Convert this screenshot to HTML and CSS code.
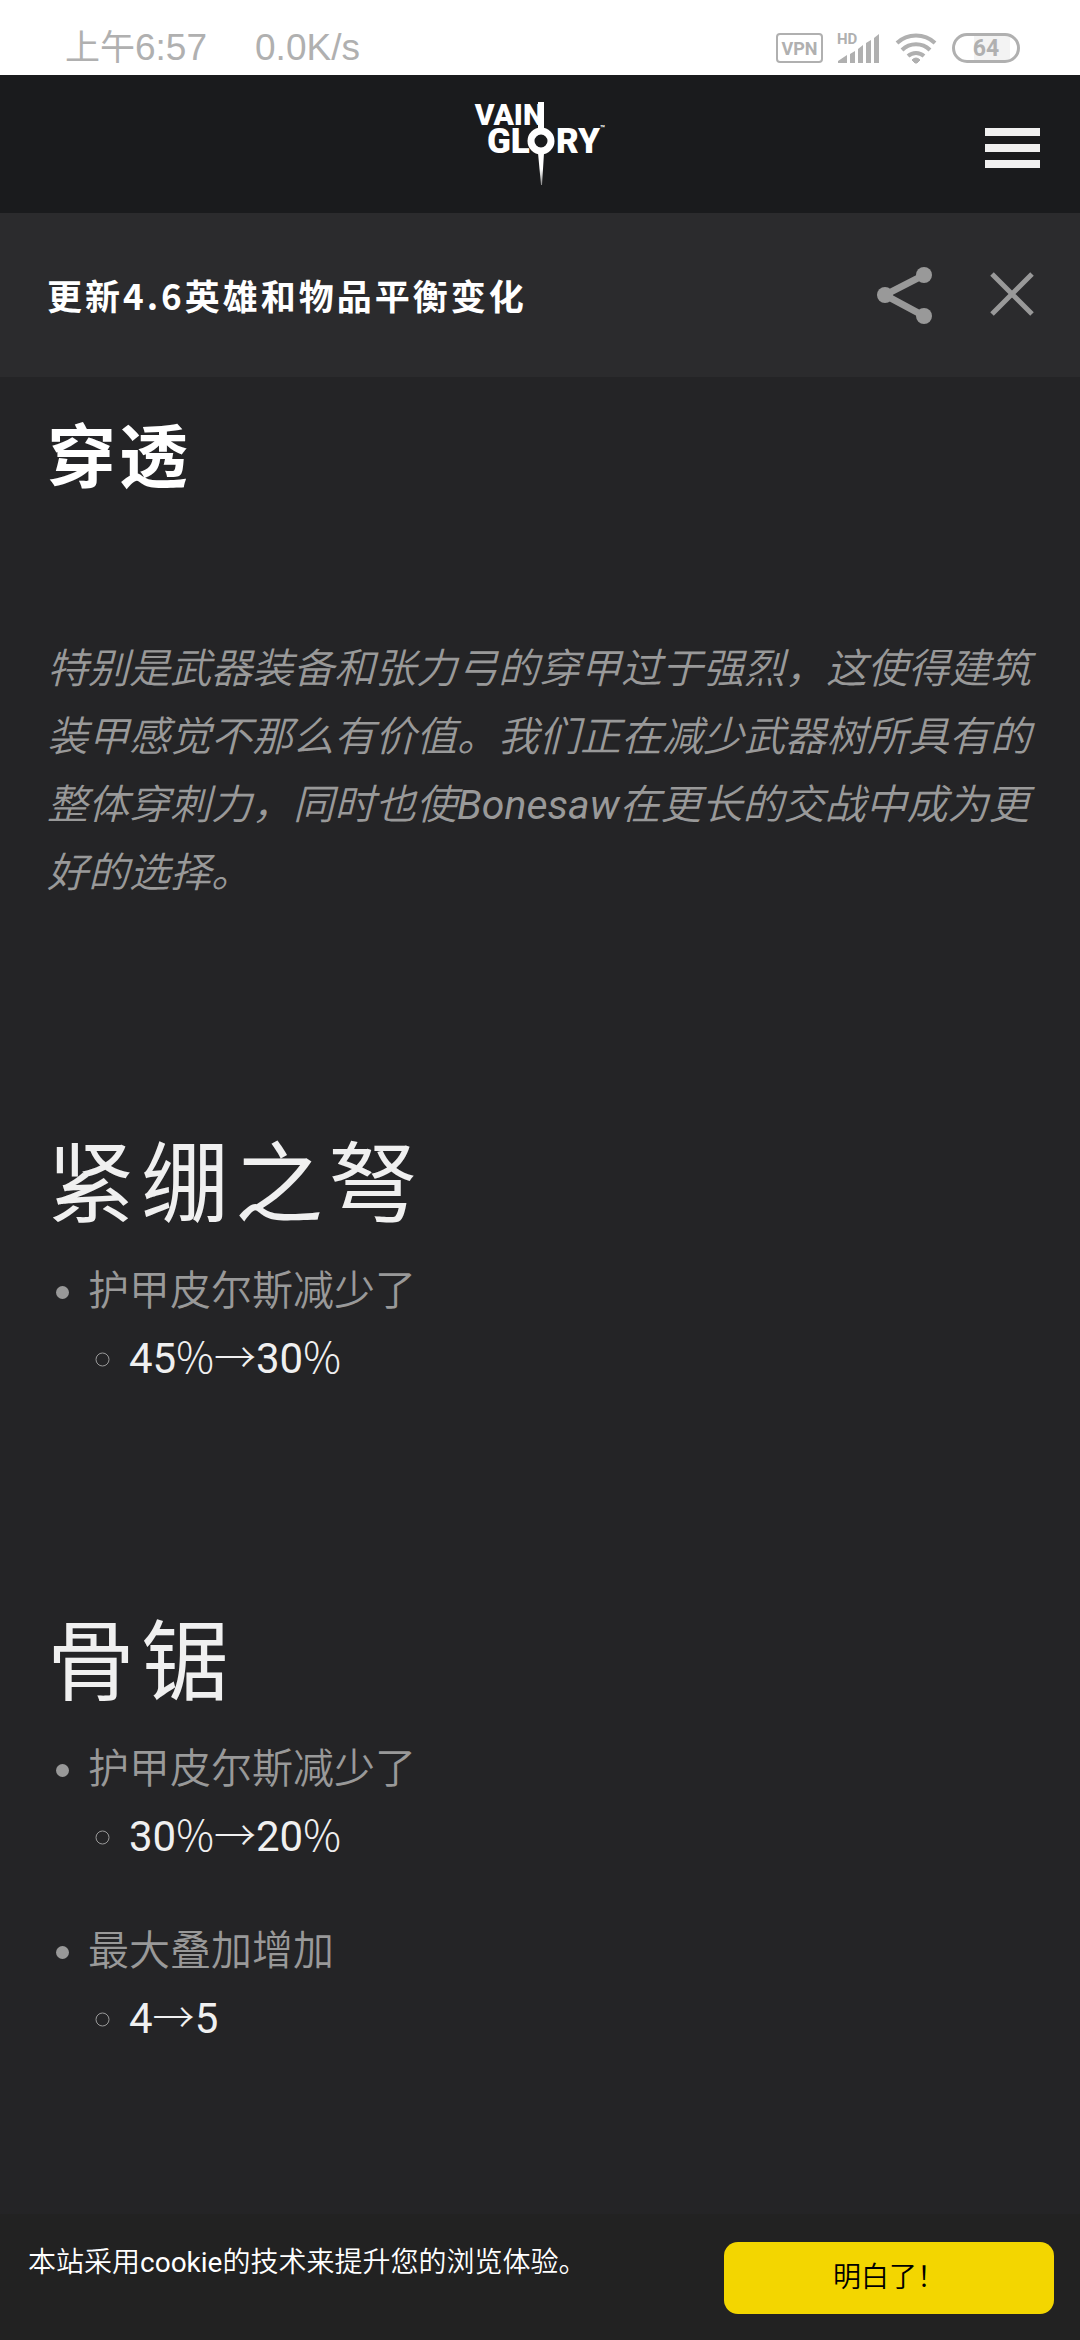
FILE: index.html
```
<!DOCTYPE html>
<html lang="zh-CN">
<head>
    <meta charset="UTF-8">
    <meta name="viewport" content="width=device-width, initial-scale=1.0">
    <title>更新4.6英雄和物品平衡变化</title>
    <link rel="stylesheet" href="styles.css">
</head>
<body>
    <div class="status">
        <div class="status-left">
            <span><span class="ampm">上午</span>6:57</span>
            <span>0.0K/s</span>
        </div>
        <div class="status-right">
            <span class="vpn">VPN</span>
            <svg class="signal" width="42" height="32" viewBox="0 0 42 32">
                <text x="-1" y="12">HD</text>
                <path d="M0 31v-2l9-6v8zM12 31v-9l5-3v12zM20 31V17l5-4v18zM28 31V11l5-3v23zM36 31V6l5-4v29z"/>
            </svg>
            <svg class="wifi" width="42" height="32" viewBox="0 0 42 32">
                <path d="M2 11a28 28 0 0 1 38 0M7 18a20 20 0 0 1 28 0M13 24a12 12 0 0 1 16 0"/>
                <path class="dot" d="M17 28q4-4 8 0l-3 3h-2z"/>
            </svg>
            <span class="battery">64</span>
        </div>
    </div>

    <header class="header">
        <a class="logo" href="#" aria-label="Vainglory">
            <svg width="132" height="84" viewBox="0 0 132 84">
                <defs>
                    <linearGradient id="blade" x1="0" y1="0" x2="0" y2="1">
                        <stop offset="0" stop-color="#fff"/>
                        <stop offset="0.5" stop-color="#fff"/>
                        <stop offset="1" stop-color="#888"/>
                    </linearGradient>
                </defs>
                <text class="logo-top" x="70" y="23">VAIN</text>
                <text class="logo-text" x="13" y="51">GL</text>
                <text class="logo-text" x="82" y="51">RY</text>
                <text class="logo-tm" x="126" y="29">™</text>
                <path d="M64 0h6v30h-6z" fill="#fff"/>
                <circle cx="67" cy="39" r="10" fill="#1a1b1d" stroke="#fff" stroke-width="7"/>
                <path d="M64 51h6l-2 32h-1z" fill="url(#blade)"/>
            </svg>
        </a>
        <button class="menu" aria-label="菜单"><i></i><i></i><i></i></button>
    </header>

    <div class="title-bar">
        <h1>更新4.6英雄和物品平衡变化</h1>
        <button aria-label="分享">
            <svg width="56" height="56" viewBox="0 0 56 56">
                <path d="M47 8L8 28l39 21" fill="none" stroke="#999" stroke-width="7"/>
                <g fill="#999">
                    <circle cx="47" cy="8" r="8"/>
                    <circle cx="8" cy="28" r="8"/>
                    <circle cx="47" cy="49" r="8"/>
                </g>
            </svg>
        </button>
        <button aria-label="关闭">
            <svg width="46" height="46" viewBox="0 0 46 46">
                <path d="M3 2l40 40M43 2L3 42" fill="none" stroke="#999" stroke-width="5"/>
            </svg>
        </button>
    </div>

    <main class="article">
        <h2>穿透</h2>
        <p>特别是武器装备和张力弓的穿甲过于强烈，这使得建筑装甲感觉不那么有价值。我们正在减少武器树所具有的整体穿刺力，同时也使Bonesaw在更长的交战中成为更好的选择。</p>

        <section>
            <h3>紧绷之弩</h3>
            <ul>
                <li>护甲皮尔斯减少了
                    <ul>
                        <li>45<span>%→</span>30<span>%</span></li>
                    </ul>
                </li>
            </ul>
        </section>

        <section>
            <h3>骨锯</h3>
            <ul>
                <li>护甲皮尔斯减少了
                    <ul>
                        <li>30<span>%→</span>20<span>%</span></li>
                    </ul>
                </li>
                <li>最大叠加增加
                    <ul>
                        <li>4<span>→</span>5</li>
                    </ul>
                </li>
            </ul>
        </section>
    </main>

    <div class="cookie">
        <p>本站采用cookie的技术来提升您的浏览体验。</p>
        <button>明白了！</button>
    </div>
</body>
</html>
```
FILE: styles.css
```
*{
    margin: 0;
    padding: 0;
    box-sizing: border-box;
}
body{
    min-height: 100vh;
    display: flex;
    flex-direction: column;
    background: #242426;
    color: #999;
    font-family: Roboto, "Noto Sans CJK SC DemiLight", "Noto Sans CJK SC", sans-serif;
    font-size: 41px;
    line-height: 68px;
}
button{
    border: none;
    background: none;
    font-family: inherit;
    cursor: pointer;
}
svg{
    display: block;
    overflow: visible;
}

/* 状态栏 */
.status{
    height: 75px;
    padding: 20px 60px 0 65px;
    display: flex;
    justify-content: space-between;
    background: #fff;
    color: #b0b0b0;
    font-family: "Liberation Sans", "Noto Sans CJK SC", sans-serif;
    font-size: 37px;
    line-height: 56px;
}
.status-left{
    display: flex;
    gap: 48px;
}
.ampm{
    font-size: 35px;
}
.status-right{
    display: flex;
    align-items: center;
    gap: 15px;
}
.vpn{
    width: 47px;
    height: 30px;
    border: 2px solid #b0b0b0;
    border-radius: 4px;
    font: 700 18px/27px Roboto, sans-serif;
    text-align: center;
}
.signal{
    fill: #b0b0b0;
    font: 700 15px Roboto, sans-serif;
}
.wifi{
    fill: none;
    stroke: #b0b0b0;
    stroke-width: 4;
}
.wifi .dot{
    fill: #b0b0b0;
    stroke-width: 1;
}
.battery{
    width: 68px;
    height: 30px;
    border: 3px solid #b0b0b0;
    border-radius: 15px;
    background: linear-gradient(90deg, #fff 30%, #f3f3f3 30%, #f3f3f3 88%, #fff 88%);
    font: 700 23px/25px Roboto, sans-serif;
    text-align: center;
}

/* 头部 */
.header{
    height: 138px;
    padding: 0 40px;
    display: grid;
    grid-template-columns: 1fr auto 1fr;
    align-items: center;
    background: #1a1b1d;
}
.logo{
    grid-column: 2;
}
.logo-text{
    fill: #fff;
    font: 900 35px Roboto, sans-serif;
}
.logo-top{
    fill: #fff;
    font: 900 30px Roboto, sans-serif;
    text-anchor: end;
}
.logo-tm{
    fill: #fff;
    font: 700 8px Roboto, sans-serif;
}
.menu{
    width: 55px;
    margin-top: 7px;
    display: grid;
    gap: 8px;
    justify-self: end;
}
.menu i{
    height: 8px;
    background: #f0f0f0;
}

/* 标题栏 */
.title-bar{
    height: 164px;
    padding: 0 45px 0 47px;
    display: flex;
    align-items: center;
    gap: 56px;
    background: #2b2b2d;
}
.title-bar h1{
    flex: 1;
    color: #fff;
    font-family: "Noto Sans CJK SC", sans-serif;
    font-size: 35px;
    font-weight: 700;
    letter-spacing: 3px;
}

/* 正文 */
.article{
    flex: 1;
    padding: 38px 47px;
}
.article h2{
    margin-bottom: 132px;
    color: #fff;
    font-family: Roboto, "Noto Sans CJK SC", sans-serif;
    font-size: 69px;
    font-weight: 700;
    line-height: 88px;
    letter-spacing: 3px;
}
.article p{
    font-style: italic;
}
.article section{
    margin-top: 222px;
}
.article section+section{
    margin-top: 214px;
}
.article h3{
    margin-bottom: 16px;
    color: #f0f0f0;
    font-family: Roboto, "Noto Sans CJK SC", sans-serif;
    font-size: 88px;
    font-weight: 400;
    line-height: 112px;
    letter-spacing: 6px;
}
.article ul{
    padding-left: 41px;
}
.article ul ul{
    font-size: 42px;
}
.article li+li{
    margin-top: 46px;
}
.article ul ul li{
    color: #f0f0f0;
}
.article ul ul li::marker{
    color: #999;
}
.article li span{
    font-family: "Noto Sans CJK SC", sans-serif;
    font-weight: 300;
    line-height: 1;
}

/* cookie提示 */
.cookie{
    padding: 28px 26px 26px 28px;
    display: flex;
    justify-content: space-between;
    background: #222;
    color: #fff;
    font-size: 28px;
    line-height: 42px;
}
.cookie button{
    width: 330px;
    height: 72px;
    border-radius: 14px;
    background: #f3d600;
    color: #000;
    font-size: 28px;
    line-height: 40px;
}
```
